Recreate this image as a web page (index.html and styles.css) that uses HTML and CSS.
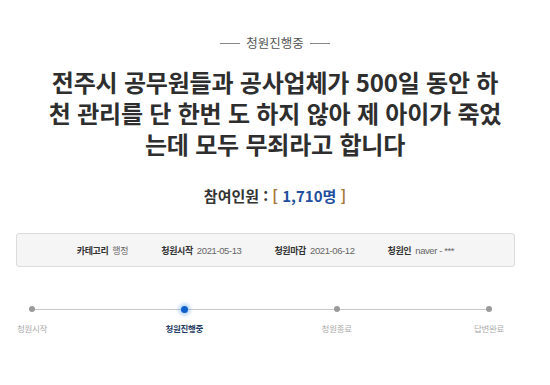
FILE: index.html
```html
<!DOCTYPE html>
<html lang="ko">
<head>
<meta charset="utf-8">
<link rel="stylesheet" href="styles.css">
</head>
<body>
<div class="page">
  <div class="status"><span class="rule"></span><span class="status-text">청원진행중</span><span class="rule"></span></div>
  <h1 class="title">전주시 공무원들과 공사업체가 500일 동안 하천 관리를 단 한번 도 하지 않아 제 아이가 죽었는데 모두 무죄라고 합니다</h1>
  <div class="count">참여인원 : <span class="bracket">[</span> <span class="num">1,710명</span> <span class="bracket">]</span></div>
  <div class="info">
    <div class="info-item"><span class="label">카테고리</span><span class="value">행정</span></div>
    <div class="info-item"><span class="label">청원시작</span><span class="value latin">2021-05-13</span></div>
    <div class="info-item"><span class="label">청원마감</span><span class="value latin">2021-06-12</span></div>
    <div class="info-item"><span class="label">청원인</span><span class="value latin">naver - ***</span></div>
  </div>
  <div class="steps">
    <div class="step"><span class="dot"></span><span class="step-label">청원시작</span></div>
    <div class="step active"><span class="dot"></span><span class="step-label">청원진행중</span></div>
    <div class="step"><span class="dot"></span><span class="step-label">청원종료</span></div>
    <div class="step"><span class="dot"></span><span class="step-label">답변완료</span></div>
  </div>
</div>
</body>
</html>
```
FILE: styles.css
```css
* { box-sizing: border-box; }
html, body { margin: 0; padding: 0; background: #fff; }
body {
  font-family: "Noto Sans CJK KR", "Noto Sans", sans-serif;
  color: #333;
  width: 550px;
  height: 385px;
  overflow: hidden;
}
.page { display: flex; flex-direction: column; }

.status {
  display: flex;
  justify-content: center;
  align-items: center;
  gap: 6px;
  margin-top: 35px;
  height: 16px;
}
.rule { width: 20px; height: 1px; background: #888; }
.status-text { font-size: 12.5px; line-height: 16px; color: #555; }

.title {
  margin: 15px auto 0;
  width: 463px;
  font-size: 24px;
  line-height: 31px;
  font-weight: 700;
  color: #2e2e2e;
  text-align: center;
  letter-spacing: -0.2px;
}

.count {
  margin-top: 27px;
  text-align: center;
  font-size: 15px;
  line-height: 20px;
  font-weight: 700;
  color: #333;
}
.bracket { color: #a8763a; }
.num { color: #1f4f9e; }

.info {
  margin: 27px 0 0 16px;
  width: 499px;
  height: 34px;
  background: #f5f5f5;
  border: 1px solid #dcdcdc;
  border-radius: 3px;
  display: flex;
  justify-content: center;
  align-items: center;
  gap: 33px;
  font-size: 9px;
}
.info-item { display: flex; align-items: center; gap: 4px; }
.label { font-weight: 700; color: #333; letter-spacing: -0.4px; }
.value { color: #666; letter-spacing: -0.3px; }
.latin { font-family: "Liberation Sans", sans-serif; font-size: 9.5px; letter-spacing: -0.4px; }

.steps {
  position: relative;
  margin: 39px 0 0 7px;
  width: 507px;
  display: flex;
  justify-content: space-between;
}
.steps::before {
  content: "";
  position: absolute;
  left: 25px;
  right: 25px;
  top: 3px;
  height: 1px;
  background: #c8c8c8;
}
.step {
  width: 50px;
  display: flex;
  flex-direction: column;
  align-items: center;
  gap: 9px;
  position: relative;
}
.dot {
  width: 6px;
  height: 6px;
  border-radius: 50%;
  background: #9a9a9a;
}
.step.active .dot {
  background: #0d5fcc;
  width: 7px;
  height: 7px;
  margin-top: -0.5px;
  margin-bottom: -0.5px;
  box-shadow: 0 0 3px 3px rgba(60, 140, 240, 0.28);
}
.step-label {
  font-size: 8.5px;
  line-height: 14px;
  color: #aaa;
  white-space: nowrap;
  letter-spacing: -0.3px;
}
.step.active .step-label { color: #273d63; font-weight: 700; }
```
